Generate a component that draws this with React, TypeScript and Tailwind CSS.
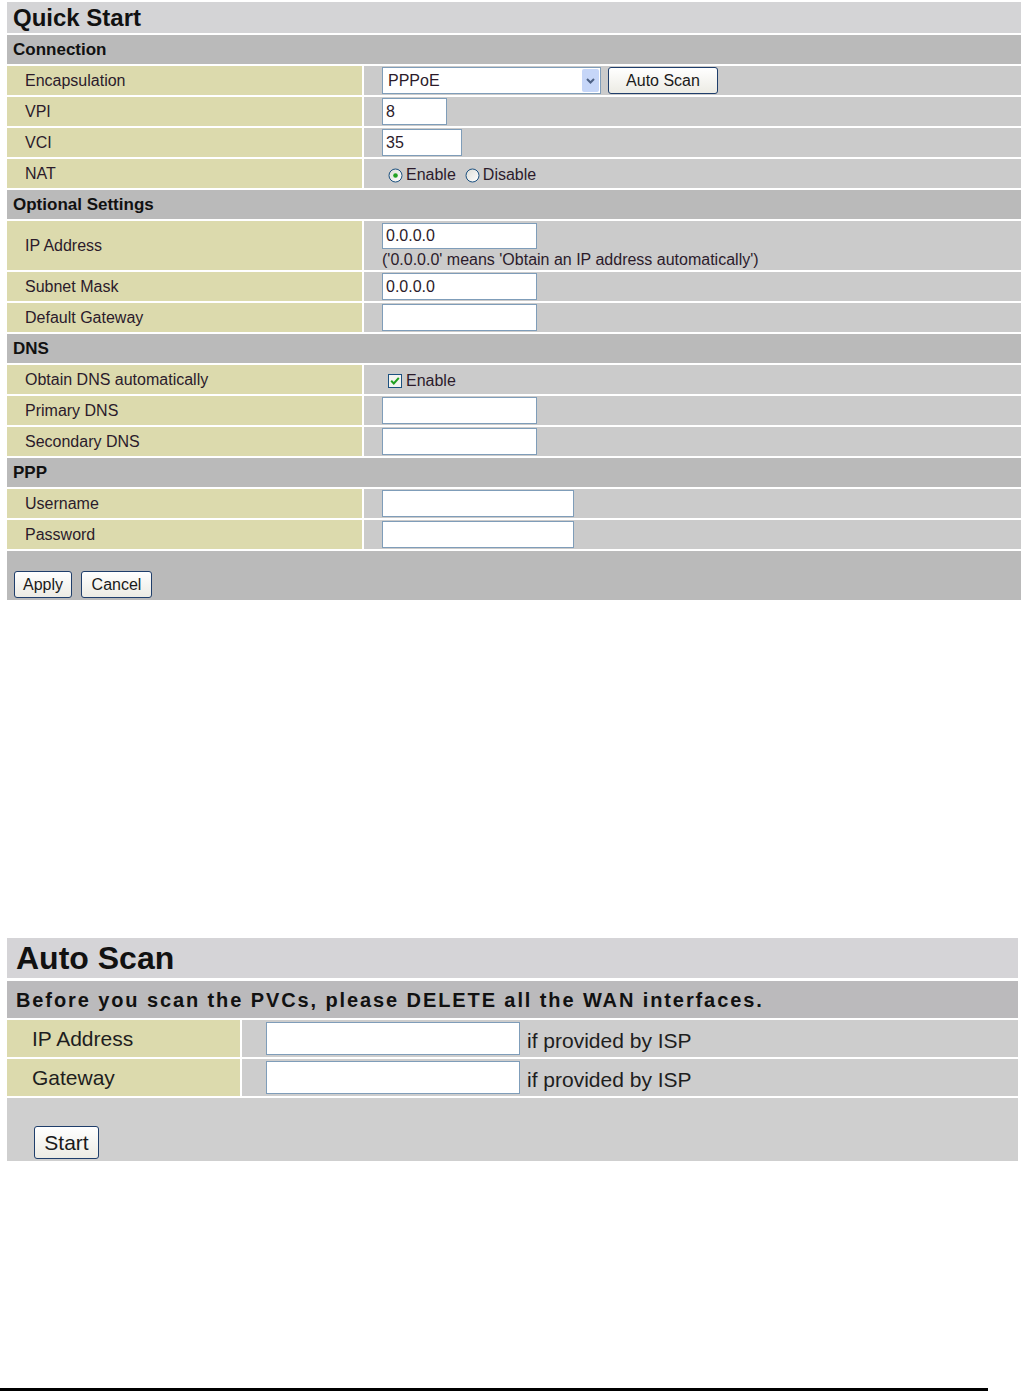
import type { ReactNode } from 'react';

const FONT = "font-['Liberation_Sans',Arial,sans-serif]";

function Radio({ checked }: { checked?: boolean }) {
  return (
    <svg width="15" height="15" viewBox="0 0 15 15" className="shrink-0">
      <defs>
        <linearGradient id={checked ? 'rg1' : 'rg2'} x1="0" y1="0" x2="1" y2="1">
          <stop offset="0" stopColor="#dcdcd6" />
          <stop offset="1" stopColor="#ffffff" />
        </linearGradient>
      </defs>
      <circle cx="7.5" cy="7.5" r="6.5" fill={`url(#${checked ? 'rg1' : 'rg2'})`} stroke="#1c5180" strokeWidth="1" />
      {checked && <circle cx="7.5" cy="7.5" r="2.3" fill="#21a121" />}
    </svg>
  );
}

function Checkbox() {
  return (
    <svg width="14" height="14" viewBox="0 0 14 14" className="shrink-0">
      <rect x="0.5" y="0.5" width="13" height="13" fill="#f4f4f0" stroke="#1c5180" />
      <path d="M3.2 6.8 L5.8 9.5 L10.8 3.8" fill="none" stroke="#21a121" strokeWidth="2" />
    </svg>
  );
}

function TextBox({ w, value, h = 'h-[27px]' }: { w: string; value?: string; h?: string }) {
  return (
    <div
      className={`${w} ${h} flex items-center border border-[#7f9db9] bg-white px-[3px] text-[16px] text-[#2b1b2b]`}
    >
      {value}
    </div>
  );
}

function XpButton({ children, className = '' }: { children: ReactNode; className?: string }) {
  return (
    <button
      type="button"
      className={`flex items-center justify-center rounded-[3px] border border-[#1f3e6b] bg-gradient-to-b from-white to-[#ecebe4] text-[#1a1a1a] ${className}`}
    >
      {children}
    </button>
  );
}

function Row({ label, children, tall }: { label: string; children: ReactNode; tall?: boolean }) {
  return (
    <div className={`flex gap-[2px] ${tall ? 'h-[49px]' : 'h-[29px]'}`}>
      <div className="flex w-[355px] shrink-0 items-center bg-[#dcdaad] pl-[18px] pt-[1px] text-[16px] text-[#2b1b2b]">
        {label}
      </div>
      <div className="flex flex-1 flex-col justify-center bg-[#cbcbcb] pl-[18px]">{children}</div>
    </div>
  );
}

function Section({ title }: { title: string }) {
  return (
    <div className="flex h-[29px] items-center bg-[#bababa] pl-[6px] text-[17px] font-bold text-[#111]">
      {title}
    </div>
  );
}

function QuickStart() {
  return (
    <div className={`flex flex-col gap-[2px] pl-[7px] pt-[2px] ${FONT}`}>
      <div className="flex h-[31px] items-center bg-[#d4d4d6] pl-[6px] text-[24px] font-bold text-[#111]">
        Quick Start
      </div>
      <Section title="Connection" />
      <Row label="Encapsulation">
        <div className="flex items-center gap-[7px]">
          <div className="flex h-[27px] w-[219px] items-center justify-between border border-[#7f9db9] bg-white pl-[5px] pr-[1px] text-[16px] text-[#2b1b2b]">
            <span>PPPoE</span>
            <span className="flex h-[23px] w-[17px] items-center justify-center rounded-[2px] bg-[#c6d6f8]">
              <svg width="9" height="6" viewBox="0 0 9 6">
                <path d="M1 1 L4.5 4.5 L8 1" fill="none" stroke="#4d6185" strokeWidth="2" />
              </svg>
            </span>
          </div>
          <XpButton className="h-[27px] w-[110px] text-[16px]">Auto Scan</XpButton>
        </div>
      </Row>
      <Row label="VPI">
        <TextBox w="w-[65px]" value="8" />
      </Row>
      <Row label="VCI">
        <TextBox w="w-[80px]" value="35" />
      </Row>
      <Row label="NAT">
        <div className="flex items-center pl-[6px] pt-[3px] text-[16px] text-[#2b1b2b]">
          <Radio checked />
          <span className="ml-[3px]">Enable</span>
          <span className="ml-[9px]">
            <Radio />
          </span>
          <span className="ml-[3px]">Disable</span>
        </div>
      </Row>
      <Section title="Optional Settings" />
      <Row label="IP Address" tall>
        <TextBox w="w-[155px]" value="0.0.0.0" h="h-[26px]" />
        <div className="mt-[2px] text-[16px] leading-[18px] text-[#2b1b2b]">
          ('0.0.0.0' means 'Obtain an IP address automatically')
        </div>
      </Row>
      <Row label="Subnet Mask">
        <TextBox w="w-[155px]" value="0.0.0.0" />
      </Row>
      <Row label="Default Gateway">
        <TextBox w="w-[155px]" />
      </Row>
      <Section title="DNS" />
      <Row label="Obtain DNS automatically">
        <div className="flex items-center pl-[6px] pt-[3px] text-[16px] text-[#2b1b2b]">
          <Checkbox />
          <span className="ml-[4px]">Enable</span>
        </div>
      </Row>
      <Row label="Primary DNS">
        <TextBox w="w-[155px]" />
      </Row>
      <Row label="Secondary DNS">
        <TextBox w="w-[155px]" />
      </Row>
      <Section title="PPP" />
      <Row label="Username">
        <TextBox w="w-[192px]" />
      </Row>
      <Row label="Password">
        <TextBox w="w-[192px]" />
      </Row>
      <div className="flex h-[49px] items-end gap-[9px] bg-[#bababa] pb-[2px] pl-[7px]">
        <XpButton className="h-[27px] w-[58px] text-[16px]">Apply</XpButton>
        <XpButton className="h-[27px] w-[71px] text-[16px]">Cancel</XpButton>
      </div>
    </div>
  );
}

function ScanRow({ label }: { label: string }) {
  return (
    <div className="flex h-[37px] gap-[2px]">
      <div className="flex w-[233px] shrink-0 items-center bg-[#dcdaad] pl-[25px] text-[21px] text-[#1e1e1e]">
        {label}
      </div>
      <div className="flex flex-1 items-center bg-[#cdcdcd] pl-[24px]">
        <div className="h-[33px] w-[254px] border border-[#7f9db9] bg-white" />
        <span className="ml-[7px] mt-[4px] text-[21px] text-[#1e1e1e]">if provided by ISP</span>
      </div>
    </div>
  );
}

function AutoScan() {
  return (
    <div className={`ml-[7px] flex w-[1011px] flex-col gap-[2px] ${FONT}`}>
      <div className="flex h-[40px] items-center bg-[#d5d4d7] pl-[9px] text-[32px] font-bold text-[#111]">
        Auto Scan
      </div>
      <div className="mt-[1px] flex h-[37px] items-center bg-[#bbbabc] pl-[9px] text-[20px] font-bold tracking-[1.9px] text-[#111]">
        Before you scan the PVCs, please DELETE all the WAN interfaces.
      </div>
      <ScanRow label="IP Address" />
      <ScanRow label="Gateway" />
      <div className="flex h-[63px] items-end bg-[#cfcfcf] pb-[2px] pl-[27px]">
        <XpButton className="h-[33px] w-[65px] text-[21px]">Start</XpButton>
      </div>
    </div>
  );
}

export default function App() {
  return (
    <div className="relative h-[1393px] w-[1021px] overflow-hidden bg-white">
      <QuickStart />
      <div className="h-[338px]" />
      <AutoScan />
      <div className="mt-[227px] h-[3px] w-[988px] bg-black" />
    </div>
  );
}
